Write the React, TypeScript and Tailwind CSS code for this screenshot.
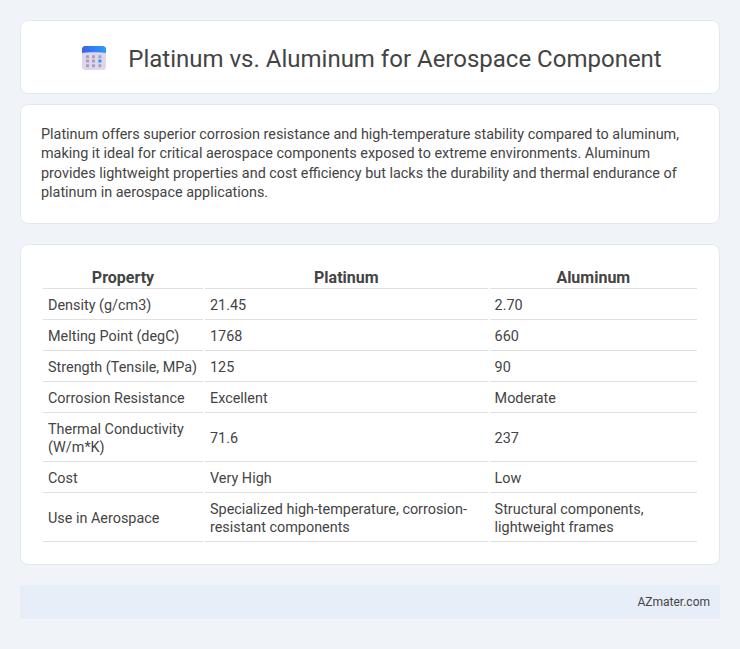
const rows: [string, string, string][] = [
  ["Density (g/cm3)", "21.45", "2.70"],
  ["Melting Point (degC)", "1768", "660"],
  ["Strength (Tensile, MPa)", "125", "90"],
  ["Corrosion Resistance", "Excellent", "Moderate"],
  ["Thermal Conductivity (W/m*K)", "71.6", "237"],
  ["Cost", "Very High", "Low"],
  ["Use in Aerospace", "Specialized high-temperature, corrosion-resistant components", "Structural components, lightweight frames"],
];

const dotX = [4, 10, 16.4];
const dotY = [9.2, 13.6, 18.2];

function CalendarIcon() {
  return (
    <svg width="24" height="24" viewBox="0 0 24 24" className="shrink-0">
      <defs>
        <linearGradient id="top" x1="0" y1="0" x2="1" y2="0">
          <stop offset="0" stopColor="#3a62e8" />
          <stop offset="1" stopColor="#2a9bfb" />
        </linearGradient>
      </defs>
      <rect x="0" y="0" width="24" height="24" rx="3.5" fill="#e0d6ec" />
      <path d="M0 7V3.5A3.5 3.5 0 0 1 3.5 0h17A3.5 3.5 0 0 1 24 3.5V7C20 6 4 6 0 7Z" fill="url(#top)" />
      {dotY.map((y, r) =>
        dotX.map((x, c) => (
          <rect key={`${r}-${c}`} x={x} y={y} width="3" height="3" rx="0.4" fill={r === 1 && c === 2 ? "#2a94f4" : "#a89fbc"} />
        ))
      )}
    </svg>
  );
}

export default function App() {
  return (
    <div className="min-h-[649px] bg-[#f0f4f8] p-5 font-['Roboto',sans-serif] text-[#444]">
      <div className="mb-2.5 flex h-[74px] items-center justify-center gap-[22px] rounded-lg border border-[#e2e8f0] bg-white pt-[2px] pl-[4px]">
        <CalendarIcon />
        <h1 className="pt-[2px] text-[24px] font-normal text-[#444]">Platinum vs. Aluminum for Aerospace Component</h1>
      </div>
      <div className="mb-5 rounded-lg border border-[#e2e8f0] bg-white p-5 text-[14.4px] leading-[19.44px]">
        Platinum offers superior corrosion resistance and high-temperature stability compared to aluminum, making it ideal for critical aerospace components exposed to extreme environments. Aluminum provides lightweight properties and cost efficiency but lacks the durability and thermal endurance of platinum in aerospace applications.
      </div>
      <div className="mb-5 rounded-lg border border-[#e2e8f0] bg-white p-5">
        <table className="w-full table-fixed border-separate border-spacing-[2px] text-[14.4px] leading-[18px]">
          <colgroup>
            <col className="w-[160px]" />
            <col className="w-[282.6px]" />
            <col />
          </colgroup>
          <thead>
            <tr>
              <th className="border-b border-[#e0e0e0] pt-[1px] pb-[1px] text-center text-[16px] leading-[19px] font-bold">Property</th>
              <th className="border-b border-[#e0e0e0] pt-[1px] pb-[1px] text-center text-[16px] leading-[19px] font-bold">Platinum</th>
              <th className="border-b border-[#e0e0e0] pt-[1px] pb-[1px] text-center text-[16px] leading-[19px] font-bold">Aluminum</th>
            </tr>
          </thead>
          <tbody>
            {rows.map((r) => (
              <tr key={r[0]}>
                {r.map((c, i) => (
                  <td key={i} className="border-b border-[#e0e0e0] px-[5px] pt-[6px] pb-[4px] align-middle">{c}</td>
                ))}
              </tr>
            ))}
          </tbody>
        </table>
      </div>
      <div className="h-[34px] bg-[#e8eef8] pr-2.5 text-right text-[12px] leading-[34px] text-[#444]">AZmater.com</div>
    </div>
  );
}
